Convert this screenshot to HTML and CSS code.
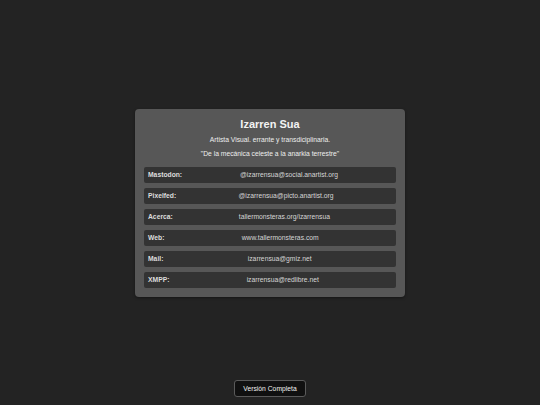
FILE: index.html
```html
<!DOCTYPE html>
<html lang="es">
<head>
<meta charset="utf-8">
<title>Izarren Sua</title>
<link rel="stylesheet" href="styles.css">
</head>
<body>
<div class="page">
  <div class="card">
    <h1 class="name">Izarren Sua</h1>
    <p class="bio">Artista Visual. errante y transdiciplinaria.</p>
    <p class="bio quote">"De la mecánica celeste a la anarkia terrestre"</p>
    <div class="links">
      <div class="row"><span class="label">Mastodon:</span><span class="value">@izarrensua@social.anartist.org</span></div>
      <div class="row"><span class="label">Pixelfed:</span><span class="value">@izarrensua@picto.anartist.org</span></div>
      <div class="row"><span class="label">Acerca:</span><span class="value">tallermonsteras.org/izarrensua</span></div>
      <div class="row"><span class="label">Web:</span><span class="value">www.tallermonsteras.com</span></div>
      <div class="row"><span class="label">Mail:</span><span class="value">izarrensua@gmiz.net</span></div>
      <div class="row"><span class="label">XMPP:</span><span class="value">izarrensua@redlibre.net</span></div>
    </div>
  </div>
  <div class="foot"><a class="btn" href="#">Versión Completa</a></div>
</div>
</body>
</html>
```
FILE: styles.css
```css
html, body {
  margin: 0;
  padding: 0;
  height: 100%;
}
body {
  background: #232323;
  font-family: "Liberation Sans", Arial, sans-serif;
  color: #e6e6e6;
}
.page {
  height: 100%;
  display: grid;
  grid-template-rows: 1fr auto 1fr;
  justify-items: center;
}
.card {
  grid-row: 2;
  width: 252px;
  padding: 8px 9px 9px;
  background: #575757;
  border-radius: 4px;
  text-align: center;
  box-shadow: 0 1px 3px rgba(0,0,0,0.4);
}
.name {
  margin: 0;
  font-size: 11px;
  font-weight: bold;
  color: #f2f2f2;
  line-height: 14px;
}
.bio {
  margin: 5.5px 0 0;
  font-size: 6.75px;
  line-height: 7px;
  color: #eeeeee;
}
.quote {
  margin-top: 7px;
}
.links {
  display: flex;
  flex-direction: column;
  gap: 5px;
  margin-top: 9.5px;
}
.row {
  display: flex;
  gap: 4px;
  align-items: center;
  height: 16px;
  padding: 0 4px;
  background: #333333;
  border-radius: 2px;
  font-size: 6.75px;
}
.label {
  font-weight: bold;
  color: #dddddd;
}
.value {
  flex: 1;
  text-align: center;
  color: #d6d6d6;
}
.foot {
  grid-row: 3;
  align-self: end;
  margin-bottom: 8px;
}
.btn {
  display: inline-block;
  height: 15px;
  line-height: 15px;
  padding: 0 8px;
  background: #101010;
  border: 1px solid #5a5a5a;
  border-radius: 3px;
  color: #f0f0f0;
  font-size: 6.75px;
  text-decoration: none;
}
```
